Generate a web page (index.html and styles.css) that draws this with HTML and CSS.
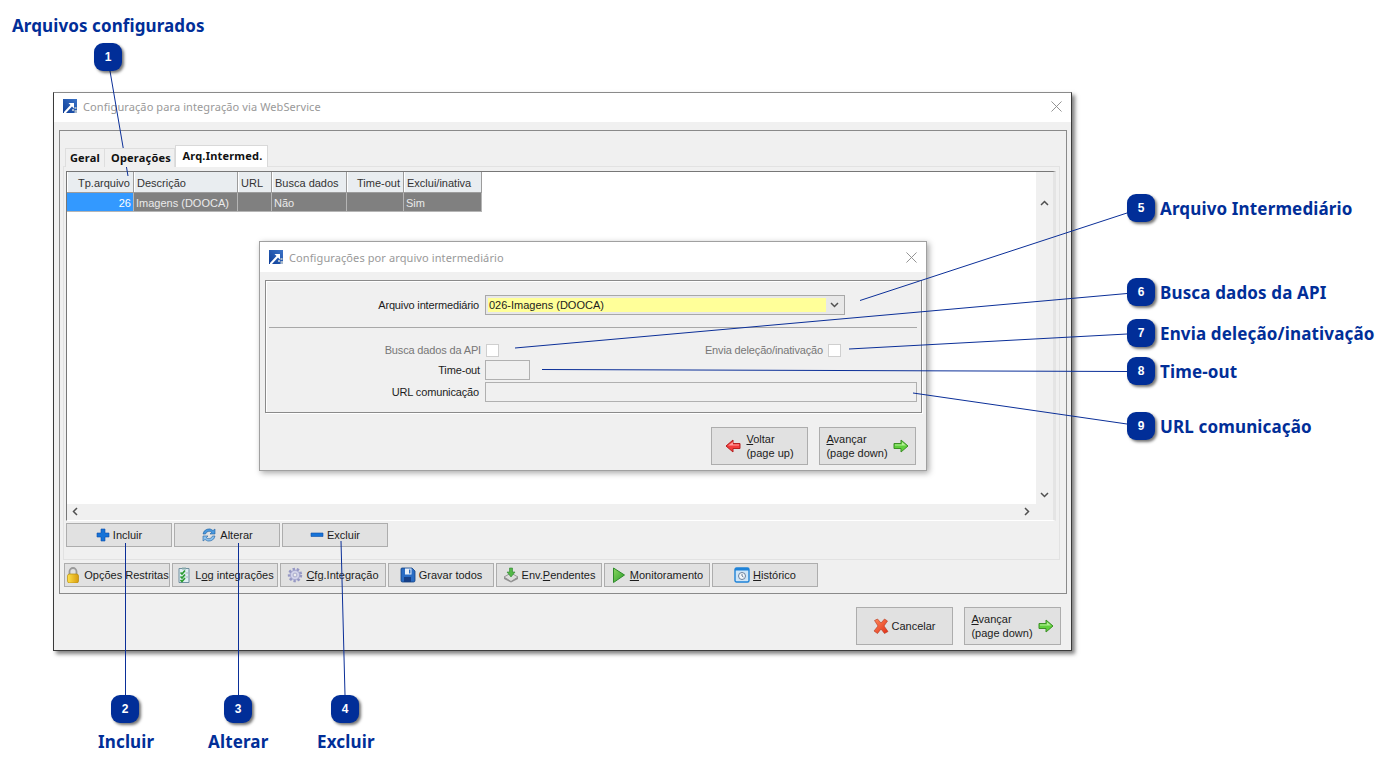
FILE: index.html
```html
<!DOCTYPE html>
<html lang="pt-BR">
<head>
<meta charset="utf-8">
<title>Arquivos configurados</title>
<link rel="stylesheet" href="styles.css">
</head>
<body>
<svg class="defs" width="0" height="0">
  <defs>
    <linearGradient id="gLogo" x1="0" y1="1" x2="1" y2="0"><stop offset="0" stop-color="#0c3c96"/><stop offset="1" stop-color="#3c74c8"/></linearGradient>
    <linearGradient id="gGold" x1="0" y1="0" x2="1" y2="0"><stop offset="0" stop-color="#ffe14a"/><stop offset="1" stop-color="#d89c10"/></linearGradient>
    <linearGradient id="gX" x1="0" y1="0" x2="1" y2="1"><stop offset="0" stop-color="#ff8a5a"/><stop offset="1" stop-color="#e02e18"/></linearGradient>
    <linearGradient id="gPlay" x1="0" y1="0" x2="1" y2="1"><stop offset="0" stop-color="#8ad860"/><stop offset="1" stop-color="#2c9c2a"/></linearGradient>
    <symbol id="logo" viewBox="0 0 14 14"><rect width="14" height="14" fill="url(#gLogo)"/><path d="M1 13 7.500 6 5.500 4H11V9.500L9 7.500 3 14H1z" fill="#fff"/><path d="M9 10h2v2H9zM11.500 8h2v2h-2zM11.500 11h2.500v3h-2.500z" fill="#a9b9cc"/></symbol>
    <symbol id="arrow-r" viewBox="0 0 16 14"><path d="M1 4.500h7V1l7 6-7 6V9.500H1z" fill="#5fd03c" stroke="#3c8f26"/><path d="M2 5.500h7V3l4 3.500H2z" fill="#b5ee96"/></symbol>
    <symbol id="arrow-l" viewBox="0 0 16 14"><path d="M15 4.500H8V1L1 7l7 6V9.500h7z" fill="#f23c3c" stroke="#b42020"/><path d="M14 5.500H8V3L3 6.500h11z" fill="#ff9c9c"/></symbol>
  </defs>
</svg>

<section class="window main-win">
  <header class="titlebar">
    <svg class="logo"><use href="#logo"/></svg>
    <span class="title">Configuração para integração via WebService</span>
    <svg class="close" viewBox="0 0 12 12"><path d="M.5.500l11 11M11.500.500l-11 11"/></svg>
  </header>
  <div class="panel">
    <nav class="tabs">
      <span class="tab tab-geral">Geral</span>
      <span class="tab tab-op">Operações</span>
      <span class="tab tab-active">Arq.Intermed.</span>
    </nav>
    <div class="tabpage">
      <div class="grid">
        <div class="grid-main">
          <div class="table">
            <div class="th right">Tp.arquivo</div>
            <div class="th">Descrição</div>
            <div class="th">URL</div>
            <div class="th">Busca dados</div>
            <div class="th right">Time-out</div>
            <div class="th">Exclui/inativa</div>
            <div class="td sel right">26</div>
            <div class="td">Imagens (DOOCA)</div>
            <div class="td"></div>
            <div class="td">Não</div>
            <div class="td"></div>
            <div class="td">Sim</div>
          </div>
          <div class="vscroll">
            <svg class="chev" viewBox="0 0 9 6"><path d="M1 5l3.500-3.500L8 5"/></svg>
            <svg class="chev" viewBox="0 0 9 6"><path d="M1 1l3.500 3.500L8 1"/></svg>
          </div>
        </div>
        <div class="hscroll">
          <svg class="chev-h" viewBox="0 0 6 9"><path d="M5 1L1.500 4.500 5 8"/></svg>
          <svg class="chev-h" viewBox="0 0 6 9"><path d="M1 1l3.500 3.500L1 8"/></svg>
        </div>
      </div>
      <div class="actions">
        <button class="btn btn-tool">
          <svg class="ic" viewBox="0 0 14 14"><path d="M5 1h4v4h4v4H9v4H5V9H1V5h4z" fill="#1673d8" stroke="#0f4fa8" stroke-width=".6"/></svg>
          <span>Incluir</span></button>
        <button class="btn btn-tool">
          <svg class="ic ic-lg" viewBox="0 0 16 16"><path d="M2 7a6 6 0 0 1 10-3.500L14 2v5H9l1.700-1.700A3.800 3.800 0 0 0 4.500 7z" fill="#4a9ae0" stroke="#20609f" stroke-width=".6"/><path d="M14 9a6 6 0 0 1-10 3.500L2 14V9h5l-1.700 1.700A3.800 3.800 0 0 0 11.500 9z" fill="#8cc2ee" stroke="#20609f" stroke-width=".6"/></svg>
          <span>Alterar</span></button>
        <button class="btn btn-tool">
          <svg class="ic" viewBox="0 0 14 14"><path d="M1 5h12v3.500H1z" fill="#1673d8" stroke="#0f4fa8" stroke-width=".6"/></svg>
          <span>Excluir</span></button>
      </div>
    </div>
    <div class="toolbar">
      <button class="btn btn-tool">
        <svg class="ic ic-lg" viewBox="0 0 16 16"><path d="M4.500 8V4.500a3.500 3.500 0 0 1 7 0V8" fill="none" stroke="#9a9a9a" stroke-width="1.800"/><rect x="2.500" y="7" width="11" height="9" rx="2" fill="url(#gGold)" stroke="#b58d10" stroke-width=".7"/></svg>
        <span>Opções Restritas</span></button>
      <button class="btn btn-tool">
        <svg class="ic ic-lg" viewBox="0 0 16 16"><path d="M3 1.500h10v14H3z" fill="#dfeef2" stroke="#6f8f9f"/><path d="M6 .500h4v2H6z" fill="#8aa"/><path d="M4.500 5.500l1.500 1.500L9 3.500M4.500 9.500 6 11l3-3.500M4.500 13l1.500 1.500 3-3.500" fill="none" stroke="#2c9c32" stroke-width="1.700"/><path d="M9.500 6h2.500M9.500 10h2.500" stroke="#a7b4ba"/></svg>
        <span>L<u>o</u>g integrações</span></button>
      <button class="btn btn-tool">
        <svg class="ic ic-lg" viewBox="0 0 16 16"><circle cx="8" cy="8" r="5.800" fill="#c4c5e2" stroke="#9698c4" stroke-width="2.800" stroke-dasharray="2.300 1.750"/><circle cx="8" cy="8" r="4.600" fill="#d2d3ea" stroke="#9a9cc6" stroke-width=".6"/><circle cx="8" cy="8" r="1.900" fill="#eceded" stroke="#8a8cb8" stroke-width=".6"/></svg>
        <span><u>C</u>fg.Integração</span></button>
      <button class="btn btn-tool">
        <svg class="ic ic-lg" viewBox="0 0 16 16"><path d="M2 1h10l3 3v9.500a1.500 1.500 0 0 1-1.500 1.500h-11A1.500 1.500 0 0 1 1 13.500V2a1 1 0 0 1 1-1z" fill="#2a6cc4" stroke="#12407f" stroke-width=".8"/><path d="M5 1.500h6.500v6H5z" fill="#e8f0f8"/><path d="M9 2.500h1.500v4H9z" fill="#2a6cc4"/><path d="M4 10h7v5H4z" fill="#163f86"/></svg>
        <span>Gravar todos</span></button>
      <button class="btn btn-tool">
        <svg class="ic ic-lg" viewBox="0 0 16 16"><path d="M1 10l7-4 7 4-7 4.500z" fill="#dcdcdc" stroke="#7a7a7a" stroke-width=".7"/><path d="M1 10v2l7 3.500 7-3.500v-2l-7 4.500z" fill="#8f8f8f"/><path d="M6.500 1h3v4H12L8 10 4 5h2.500z" fill="#54b848" stroke="#2d8430" stroke-width=".6"/></svg>
        <span>Env.<u>P</u>endentes</span></button>
      <button class="btn btn-tool">
        <svg class="ic ic-lg" viewBox="0 0 16 16"><path d="M2.500 1l11 7-11 7.500z" fill="url(#gPlay)" stroke="#2f8a2c"/></svg>
        <span><u>M</u>onitoramento</span></button>
      <button class="btn btn-tool">
        <svg class="ic ic-lg" viewBox="0 0 16 16"><rect x="1" y="1" width="14" height="14" rx="1.500" fill="#cfe6f8" stroke="#1f83d8" stroke-width="1.400"/><path d="M1 1h14v2.500H1z" fill="#1f83d8"/><circle cx="8" cy="9" r="3.500" fill="#f4f8fb" stroke="#6a7f9c"/><path d="M8 7v2l1.500 1" fill="none" stroke="#4a5f80" stroke-width=".8"/></svg>
        <span><u>H</u>istórico</span></button>
    </div>
  </div>
  <footer class="footer">
    <button class="btn btn-big btn-center">
      <svg class="ic ic-lg" viewBox="0 0 16 16"><path d="M1.500 2.500l3-1.500L8 5l3.500-4 3 2L11 8l4 5.500-3.500 2L8 11l-3.500 4.500L1 13l4-5z" fill="url(#gX)" stroke="#b3361c" stroke-width=".6"/></svg>
      <span>Cancelar</span></button>
    <button class="btn btn-big">
      <span class="two"><span><u>A</u>vançar</span><span>(page down)</span></span>
      <svg class="ic-arrow"><use href="#arrow-r"/></svg></button>
  </footer>
</section>

<section class="window dialog">
  <header class="titlebar">
    <svg class="logo"><use href="#logo"/></svg>
    <span class="title">Configurações por arquivo intermediário</span>
    <svg class="close" viewBox="0 0 12 12"><path d="M.5.500l11 11M11.500.500l-11 11"/></svg>
  </header>
  <div class="group">
    <div class="row row-combo">
      <label class="lbl">Arquivo intermediário</label>
      <div class="combo"><span class="combo-val">026-Imagens (DOOCA)</span>
        <span class="combo-btn"><svg class="chev chev-combo" viewBox="0 0 9 6"><path d="M1 1l3.500 3.500L8 1"/></svg></span></div>
    </div>
    <hr class="sep">
    <div class="row row-check">
      <label class="lbl off lbl-check">Busca dados da API</label>
      <span class="check"></span>
      <label class="lbl off lbl-check2">Envia deleção/inativação</label>
      <span class="check"></span>
    </div>
    <div class="row row-time">
      <label class="lbl lbl-time">Time-out</label>
      <span class="input input-time"></span>
    </div>
    <div class="row row-url">
      <label class="lbl">URL comunicação</label>
      <span class="input input-url"></span>
    </div>
  </div>
  <footer class="footer footer-dlg">
    <button class="btn btn-big btn-back">
      <svg class="ic-arrow"><use href="#arrow-l"/></svg>
      <span class="two"><span><u>V</u>oltar</span><span>(page up)</span></span></button>
    <button class="btn btn-big">
      <span class="two"><span><u>A</u>vançar</span><span>(page down)</span></span>
      <svg class="ic-arrow"><use href="#arrow-r"/></svg></button>
  </footer>
</section>

<svg class="leaders" width="1392" height="770" viewBox="0 0 1392 770">
  <path d="M110 71 128 176"/>
  <path d="M125.500 695V543"/>
  <path d="M238.500 695V543"/>
  <path d="M345 695 341 541"/>
  <path d="M1127 213 860 300.500"/>
  <path d="M1127 293.500 515 348"/>
  <path d="M1127 334 849 349"/>
  <path d="M1127 371.500 542 369.500"/>
  <path d="M1127 424 913 393"/>
</svg>

<span class="badge b1">1</span><span class="badge b2">2</span><span class="badge b3">3</span>
<span class="badge b4">4</span><span class="badge b5">5</span><span class="badge b6">6</span>
<span class="badge b7">7</span><span class="badge b8">8</span><span class="badge b9">9</span>

<h1 class="note n1">Arquivos configurados</h1>
<h2 class="note n2">Incluir</h2>
<h2 class="note n3">Alterar</h2>
<h2 class="note n4">Excluir</h2>
<h2 class="note n5">Arquivo Intermediário</h2>
<h2 class="note n6">Busca dados da API</h2>
<h2 class="note n7">Envia deleção/inativação</h2>
<h2 class="note n8">Time-out</h2>
<h2 class="note n9">URL comunicação</h2>
</body>
</html>
```
FILE: styles.css
```css
* { box-sizing: border-box; }
html, body { margin: 0; padding: 0; }
body {
  position: relative;
  width: 1392px;
  height: 770px;
  overflow: hidden;
  background: #fff;
  font-family: "Liberation Sans", Arial, sans-serif;
  font-size: 11px;
  color: #1c1c1c;
}
.defs { position: absolute; }

.window {
  position: absolute;
  display: flex;
  flex-direction: column;
  background: #f0f0f0;
}
.main-win {
  left: 53px; top: 92px; width: 1019px; height: 559px;
  border: 1px solid #3a3a3a;
  border-top-color: #8a8a8a;
  box-shadow: 3px 3px 4px rgba(0,0,0,.5);
}
.dialog {
  left: 259px; top: 241px; width: 668px; height: 230px;
  border: 1px solid #a0a0a0;
  box-shadow: 2px 2px 6px rgba(0,0,0,.35);
}
.titlebar {
  display: flex;
  align-items: center;
  flex: none;
  height: 30px;
  padding: 0 9px;
  background: #fff;
}
.main-win .titlebar { height: 29px; padding-bottom: 3px; }
.logo { width: 14px; height: 14px; flex: none; margin-right: 6px; }
.title { flex: 1; color: #999; font-family: "Noto Sans", sans-serif; font-size: 11px; letter-spacing: .1px; }
.close { width: 11px; height: 11px; flex: none; fill: none; stroke: #8a8a8a; stroke-width: 1; }

.panel {
  display: flex;
  flex-direction: column;
  margin: 8px 4px 0 5px;
  height: 464px;
  padding: 14px 6px 0 3px;
  border: 1px solid #8a8a8a;
}
.tabs {
  display: flex;
  align-items: flex-end;
  height: 22px;
  margin-left: 2px;
  position: relative;
  z-index: 1;
  font-family: "Noto Sans", sans-serif;
  font-weight: 700;
  letter-spacing: .2px;
}
.tab {
  display: flex;
  align-items: center;
  justify-content: center;
  height: 19px;
  padding-bottom: 2px;
  background: #f0f0f0;
  border: 1px solid #dedede;
  border-bottom: 0;
  color: #111;
}
.tab-geral { width: 40px; }
.tab-op { width: 70px; border-left: 0; padding-left: 3px; }
.tab-active {
  width: 93px; height: 22px;
  background: #fff;
  border-color: #d9d9d9;
  padding: 0 0 3px 2px;
}
.tabpage {
  display: flex;
  flex-direction: column;
  height: 394px;
  margin-top: -1px;
  padding: 4px 3px 0 2px;
  border: 1px solid #e2e2e2;
  background: #f0f0f0;
}
.grid {
  display: flex;
  flex-direction: column;
  width: 990px;
  height: 350px;
  background: #fff;
  border-top: 1px solid #777;
  border-left: 1px solid #777;
  border-right: 3px solid #e4e4e4;
  border-bottom: 1px solid #fff;
}
.grid-main { display: flex; flex: 1; min-height: 0; }
.table {
  flex: 1;
  display: grid;
  grid-template-columns: 67px 104px 34px 75px 57px 78px;
  grid-auto-rows: min-content;
  align-content: start;
  justify-content: start;
}
.th {
  height: 21px;
  line-height: 22px;
  padding: 0 3px;
  background: #e9edf0;
  border-right: 1px solid #9c9c9c;
  border-bottom: 1px solid #9c9c9c;
  box-shadow: inset 1px 0 0 #fff;
  color: #333;
}
.td {
  height: 19px;
  line-height: 20px;
  padding: 0 2px;
  background: #808080;
  color: #eaeaea;
  border-right: 1px solid #b5b5b5;
  border-bottom: 1px solid #b5b5b5;
}
.td.sel { background: #3399ff; color: #fff; }
.right { text-align: right; }
.vscroll {
  flex: none;
  display: flex;
  flex-direction: column;
  justify-content: space-between;
  align-items: center;
  width: 17px;
  padding: 28px 0 6px;
  background: #f0f0f0;
}
.hscroll {
  flex: none;
  display: flex;
  justify-content: space-between;
  align-items: center;
  height: 16px;
  padding: 0 23px 2px 5px;
  background: #f0f0f0;
}
.chev { width: 9px; height: 6px; fill: none; stroke: #505050; stroke-width: 1.500; }
.chev-h { width: 6px; height: 9px; fill: none; stroke: #505050; stroke-width: 1.500; }

.btn {
  display: flex;
  align-items: center;
  justify-content: center;
  margin: 0;
  padding: 0;
  background: #e1e1e1;
  border: 1px solid #adadad;
  font: inherit;
  color: #1c1c1c;
}
.btn-tool { width: 106px; height: 24px; gap: 3px; white-space: nowrap; }
.actions { display: flex; gap: 2px; margin-top: 2px; }
.toolbar { display: flex; gap: 2px; margin: 3px 0 0 1px; }
.ic { width: 14px; height: 14px; flex: none; }
.ic-lg { width: 16px; height: 16px; }
.ic-arrow { width: 16px; height: 14px; flex: none; }

.footer {
  display: flex;
  justify-content: flex-end;
  gap: 11px;
  padding: 13px 10px 0 0;
}
.footer-dlg { padding-top: 14px; }
.btn-big {
  width: 97px; height: 38px;
  gap: 5px;
  text-align: left;
}
.btn-center { gap: 2px; }
.two { display: flex; flex-direction: column; line-height: 14px; }

.group {
  display: flex;
  flex-direction: column;
  height: 133px;
  margin: 8px 4px 0 5px;
  border: 1px solid #8a8a8a;
  box-shadow: 1px 1px 0 #fff, inset 1px 1px 0 #fff;
}
.row { display: flex; align-items: center; }
.lbl { flex: none; width: 213px; text-align: right; letter-spacing: -.15px; }
.off { color: #777; }
.row-combo { height: 20px; margin-top: 14px; gap: 6px; }
.combo {
  display: flex;
  width: 360px;
  height: 20px;
  padding: 2px;
  background: #e8e8e8;
  border: 1px solid #a8a8a8;
}
.combo-val { flex: 1; padding-left: 1px; line-height: 14px; background: #ffff99; color: #1c1c1c; }
.combo-btn { flex: none; width: 16px; display: flex; align-items: center; justify-content: center; }
.sep { width: 648px; height: 1px; margin: 12px 0 0 3px; border: 0; background: #a8a8a8; }
.row-check { height: 14px; margin-top: 15px; }
.lbl-check { width: 215px; margin-right: 5px; }
.lbl-check2 { width: 324px; margin-right: 5px; }
.check { flex: none; width: 13px; height: 13px; background: #fff; border: 1px solid #cfcfcf; }
.row-time { height: 20px; margin-top: 3px; gap: 5px; }
.lbl-time { width: 214px; }
.row-url { height: 20px; margin-top: 2px; gap: 6px; }
.input { display: block; height: 20px; background: #f0f0f0; border: 1px solid #b0b0b0; }
.input-time { width: 45px; }
.input-url { width: 432px; }

.leaders { position: absolute; left: 0; top: 0; pointer-events: none; }
.leaders path { fill: none; stroke: #0b2f98; stroke-width: 1; }

.badge {
  position: absolute;
  display: flex;
  align-items: center;
  justify-content: center;
  width: 28px; height: 28px;
  background: #012e98;
  border-radius: 9px;
  box-shadow: 2px 2px 3px rgba(0,0,0,.55);
  color: #fff;
  font-family: "Liberation Sans", sans-serif;
  font-size: 12px;
  font-weight: 700;
}
.b1 { left: 94px; top: 43px; }
.b2 { left: 111px; top: 695px; }
.b3 { left: 224px; top: 695px; }
.b4 { left: 331px; top: 695px; }
.b5 { left: 1127px; top: 194px; }
.b6 { left: 1127px; top: 278px; }
.b7 { left: 1127px; top: 319px; }
.b8 { left: 1127px; top: 357px; }
.b9 { left: 1127px; top: 412px; }

.note {
  position: absolute;
  margin: 0;
  color: #012e98;
  font-family: "Noto Sans", sans-serif;
  font-size: 17px;
  font-weight: 700;
  line-height: 22px;
  letter-spacing: .15px;
  white-space: nowrap;
}
.n1 { left: 12px; top: 15px; letter-spacing: .1px; }
.n2 { left: 98px; top: 731px; }
.n3 { left: 208px; top: 731px; }
.n4 { left: 317px; top: 731px; }
.n5 { left: 1160px; top: 198px; }
.n6 { left: 1160px; top: 282px; }
.n7 { left: 1160px; top: 323px; }
.n8 { left: 1160px; top: 361px; }
.n9 { left: 1160px; top: 416px; }
```
